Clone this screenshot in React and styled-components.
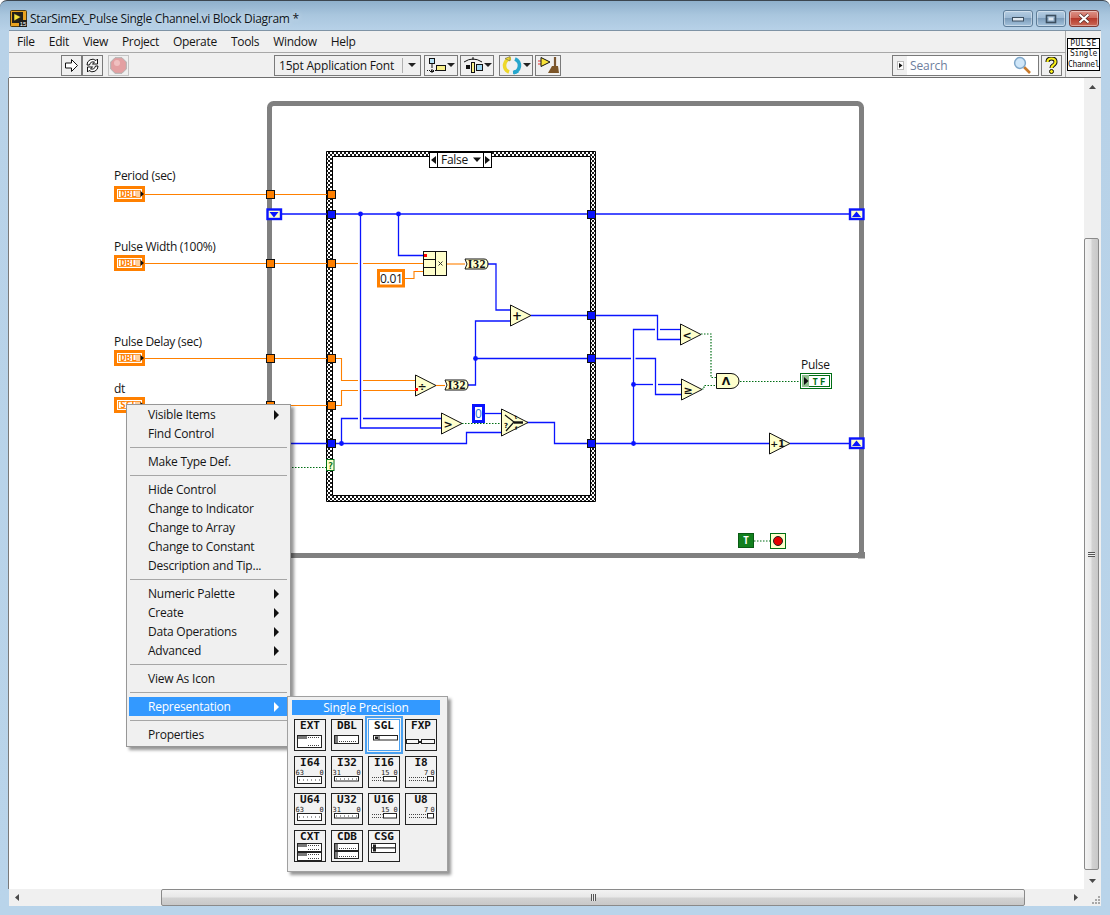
import React from "react";
import styled, { createGlobalStyle, css } from "styled-components";

const UI = `"Open Sans", "Noto Sans", "Liberation Sans", sans-serif`;
const MONO = `"DejaVu Sans Mono", "Liberation Mono", monospace`;

const Global = createGlobalStyle`
  html, body { margin: 0; padding: 0; background: #fff; }
  body { font-family: ${UI}; font-size: 12px; color: #111; }
  #root { width: 1110px; height: 915px; overflow: hidden; }
`;

const Win = styled.div`
  width: 1110px; height: 915px; box-sizing: border-box;
  display: flex; flex-direction: column;
  padding: 0 9px 9px;
  border-radius: 7px 7px 0 0;
  border-top: 1px solid #3c4650;
  background: linear-gradient(180deg, #8fb0cc 0, #a9c6de 14px, #b8d2e8 30px, #b9d4ea 100%);
`;
const TitleBar = styled.div`
  height: 29px; display: flex; align-items: center; flex: none; position: relative;
`;
const TitleText = styled.div`
  margin-left: 2px; font-size: 12px; letter-spacing: -0.3px; color: #10161c;
  text-shadow: 0 0 6px rgba(255,255,255,.7); padding-top: 6px;
`;
const Controls = styled.div`
  margin-left: auto; margin-right: 2px; display: flex; gap: 3px; align-self: flex-start; margin-top: 9px;
`;
const Ctl = styled.div`
  width: 30px; height: 17px; box-sizing: border-box; display: flex; align-items: center; justify-content: center;
  border: 1px solid #5d7c98; border-radius: 3px;
  background: linear-gradient(180deg, #b5cde2 0, #9cb9d4 45%, #7c9cba 50%, #a5c3dc 100%);
  box-shadow: inset 0 0 0 1px rgba(255,255,255,.4);
  ${p => p.$close && css`
    border-color: #7d3a35;
    background: linear-gradient(180deg, #dd9388 0, #cf6a5c 45%, #b53a2c 50%, #cb6a58 100%);
  `}
`;
const Client = styled.div`
  flex: 1; min-height: 0; display: flex; flex-direction: column; background: #f0f0f0;
  border-top: 1px solid #7f93a5;
`;
const TopArea = styled.div`
  height: 47px; flex: none; display: flex; background: #f0f0f0; border-bottom: 1px solid #6e6e6e; box-sizing: border-box;
`;
const TopLeft = styled.div`
  flex: 1; display: flex; flex-direction: column; border-right: 1px solid #a8a8a8;
`;
const MenuBar = styled.div`
  height: 21px; display: flex; align-items: center; padding-left: 1px; border-bottom: 1px solid #a8a8a8; flex: none;
`;
const MenuTitle = styled.span`
  padding: 0 7px; font-size: 12px; letter-spacing: -0.3px; color: #151515;
`;
const Toolbar = styled.div`
  flex: 1; display: flex; align-items: center; padding: 0 3px 0 52px;
`;
const Tool = styled.div`
  width: ${p => p.$w || 21}px; height: 21px; box-sizing: border-box; flex: none;
  margin-left: ${p => p.$ml || 0}px;
  display: flex; align-items: center; justify-content: center;
  border: 1px solid ${p => p.$light ? "#c4c4c4" : "#7a7a7a"};
  background: #f0f0f0;
`;
const FontRing = styled(Tool)`
  justify-content: flex-start; padding-left: 4px; font-size: 12px; color: #151515; letter-spacing: -0.2px;
`;
const RingSep = styled.span`
  margin-left: auto; width: 1px; height: 15px; background: #b0b0b0; margin-right: 5px;
`;
const Drop = styled.span`
  width: 0; height: 0; flex: none; margin-right: ${p => p.$mr ?? 4}px;
  border-left: 4px solid transparent; border-right: 4px solid transparent; border-top: 4px solid #222;
`;
const Search = styled.div`
  margin-left: auto; width: 147px; height: 21px; box-sizing: border-box; border: 1px solid #7a7a7a;
  background: #fff; display: flex; align-items: center; flex: none;
`;
const SearchTab = styled.div`
  width: 14px; align-self: stretch; background: #f0f0f0; display: flex; align-items: center; justify-content: center; margin-right: 2px;
`;
const SearchText = styled.span`
  font-size: 12px; color: #6d7d9c; flex: 1; padding-left: 1px; letter-spacing: -0.1px;
`;
const IconPane = styled.div`
  width: 35px; flex: none; display: flex; align-items: flex-start; justify-content: center; padding-top: 7px; box-sizing: border-box;
`;
const IconBox = styled.div`
  width: 33px; height: 33px; box-sizing: border-box; border: 1px solid #000; background: #fff;
  font-family: ${MONO}; font-size: 8px; line-height: 10.5px; text-align: center; color: #111; letter-spacing: -.35px;
`;
const IconHead = styled.div`
  border-bottom: 1px solid #000; height: 9px; line-height: 9px; letter-spacing: 0.5px;
`;
const Middle = styled.div`
  height: 811px; flex: none; display: flex;
`;
const Diagram = styled.div`
  flex: 1; position: relative; background: #fff; border-left: 1px solid #7a7a7a; margin-left: -1px;
`;
const DiagramSvg = styled.svg`
  display: block; width: 1075px; height: 811px;
`;
const VBar = styled.div`
  width: 17px; flex: none; display: flex; flex-direction: column; background: #f0f0f0;
`;
const ArrowCell = styled.div`
  width: 17px; height: ${p => p.$h || 17}px; flex: none; display: flex; align-items: center; justify-content: center;
`;
const VTrack = styled.div`
  flex: 1; display: flex; flex-direction: column; padding: 142px 2px 1px 0;
`;
const Thumb = styled.div`
  flex: 1; box-sizing: border-box; border: 1px solid #8a8a8a; border-radius: 2px; display: flex; align-items: center; justify-content: center;
  background: ${p => p.$v
    ? "linear-gradient(90deg,#f2f2f2 0,#e8e8e8 45%,#d2d2d2 55%,#c8c8c8 100%)"
    : "linear-gradient(180deg,#f2f2f2 0,#e8e8e8 45%,#d2d2d2 55%,#c8c8c8 100%)"};
`;
const Grip = styled.div`
  width: ${p => p.$v ? 7 : 5}px; height: ${p => p.$v ? 5 : 7}px;
  background: ${p => p.$v
    ? "repeating-linear-gradient(180deg,#555 0 1px,#eee 1px 2px)"
    : "repeating-linear-gradient(90deg,#555 0 1px,#eee 1px 2px)"};
`;
const HBar = styled.div`
  height: 17px; flex: none; display: flex; background: #f0f0f0;
`;
const HTrack = styled.div`
  flex: 1; display: flex; padding: 0 42px 0 135px;
`;
const Corner = styled.div`
  width: 17px; flex: none; display: flex; align-items: flex-end; justify-content: flex-end;
`;

/* context menu */
const Menu = styled.div`
  position: absolute; left: 117px; top: 326px; width: 165px; box-sizing: border-box; z-index: 3;
  background: #f0f0f0; border: 1px solid #979797; padding: 0 2px 2px;
  box-shadow: 3px 3px 3px rgba(0,0,0,.42);
`;
const Row = styled.div`
  height: 19px; display: flex; align-items: center; padding-left: 19px; padding-right: 9px;
  font-size: 12px; color: #151515; letter-spacing: -0.22px;
  ${p => p.$on && css`background: #3399ff; color: #fff;`}
`;
const RowArrow = styled.span`
  margin-left: auto; width: 0; height: 0;
  border-top: 5px solid transparent; border-bottom: 5px solid transparent;
  border-left: 5px solid ${p => p.$on ? "#fff" : "#111"};
`;
const Sep = styled.div`
  height: 9px; display: flex; align-items: center; padding: 0 1px;
  &::before { content: ""; flex: 1; height: 1px; background: #a6a6a6; }
`;
const Palette = styled.div`
  position: absolute; left: 278px; top: 618px; width: 161px; height: 176px; box-sizing: border-box; z-index: 4;
  background: #f0f0f0; border: 1px solid #a0a0a0; padding: 3px 7px 0 4px;
  box-shadow: 3px 3px 3px rgba(0,0,0,.42);
`;
const PaletteHead = styled.div`
  height: 15px; background: #3399ff; color: #fff; text-align: center; font-size: 12px; line-height: 15px; margin-bottom: 4px; letter-spacing: -.1px;
`;
const RepGrid = styled.div`
  display: grid; grid-template-columns: repeat(4, 32px); grid-auto-rows: 32px; gap: 5px; padding-left: 2px;
`;
const RepCell = styled.div`
  position: relative; box-sizing: border-box; border: 1px solid #222; background: #f2f2f2;
  display: flex; flex-direction: column; align-items: center;
  ${p => p.$sel && css`outline: 2px solid #4aa0f0; outline-offset: 1px; border-color: #4aa0f0; background: #fff;`}
`;
const RepTitle = styled.span`
  font-family: ${MONO}; font-weight: 700; font-size: 11px; line-height: 12px; height: 12px; color: #111;
`;
const RepSvg = styled.svg`
  display: block; width: 30px; height: 18px;
`;

/* svg text parts */
const Lbl = styled.text`
  font-family: ${UI}; font-size: 12px; fill: #151515; letter-spacing: -0.3px;
`;
const Glyph = styled.text`
  font-family: "DejaVu Sans", sans-serif; font-weight: 700; font-size: ${p => p.$s || 11}px; fill: #111; text-anchor: middle;
`;
const TermText = styled.text`
  font-family: ${MONO}; font-weight: 700; font-size: ${p => p.$s || 9}px; fill: ${p => p.$c}; text-anchor: middle;
`;
const I32Text = styled.text`
  font-family: "Liberation Serif", serif; font-weight: 700; font-size: 12px; fill: #111; text-anchor: middle; letter-spacing: .6px;
`;
const TinyNum = styled.text`
  font-family: ${MONO}; font-size: 7px; fill: #222;
`;

const BLUE = "#0a14ff", OR = "#ff8000", GR = "#006e14", Y = "#ffffcc";

const blue = [
  "281,214 327,214", "335,214 587,214", "595,214 849,214",
  "360.5,214 360.5,428 441,428", "398.5,214 398.5,255.5 423,255.5",
  "488,264 496,264 496,310 510,310", "531,315.5 587,315.5",
  "595,315.5 657.5,315.5 657.5,339.5 680,339.5",
  "468,385 475.5,385 475.5,321 510,321", "475.5,358.5 587,358.5",
  "595,358.5 631,358.5", "635.5,358.5 655.5,358.5 655.5,394.5 681,394.5",
  "633.5,443 633.5,329.5 655,329.5", "660,329.5 680,329.5",
  "633.5,384.5 653,384.5", "658,384.5 681,384.5",
  "595,443.5 769,443.5", "790,443.5 849,443.5",
  "527,422.5 554.5,422.5 554.5,443.5 587,443.5",
  "335,443.5 466.5,443.5 466.5,432.5 501,432.5",
  "341.5,443.5 341.5,418.5 358,418.5", "363,418.5 441,418.5",
  "485,413.5 501,413.5", "280,443.5 327,443.5",
];
const orange = [
  "145,194.5 266,194.5", "275,194.5 327,194.5",
  "145,263.5 266,263.5", "275,263.5 327,263.5", "335,263.5 358,263.5", "363,263.5 423,263.5",
  "405,278.5 414,278.5 414,271.5 423,271.5", "447,264 465,264",
  "145,358.5 266,358.5", "275,358.5 327,358.5",
  "335,358.5 341.5,358.5 341.5,380.5 358,380.5", "363,380.5 415,380.5",
  "280,405.5 327,405.5",
  "335,405.5 341.5,405.5 341.5,390.5 358,390.5", "363,390.5 415,390.5",
  "436,385.5 445,385.5",
];
const green = [
  "280,467.5 326,467.5", "462,423.5 501,423.5",
  "701,334 711,334 711,377.5 716,377.5", "702,389 704,389 704,385.5 716,385.5",
  "740,381.5 800,381.5", "754,541 770,541",
];
const tunnels = [
  [266, 190, OR], [327, 190, OR], [266, 259, OR], [327, 259, OR],
  [266, 354, OR], [327, 354, OR], [266, 401, OR], [327, 401, OR],
  [327, 210, BLUE], [587, 210, BLUE], [587, 311, BLUE], [587, 354, BLUE],
  [327, 439, BLUE], [587, 439, BLUE],
];
const junctions = [
  [360.5, 214], [398.5, 214], [475.5, 358.5], [341.5, 443.5], [633.5, 384.5], [633.5, 443.5],
];
const triangles = [
  { x: 510, y: 305, t: "+", s: 12, dy: 4 }, { x: 415, y: 375, t: "÷", s: 11, dy: 4, dot: true },
  { x: 441, y: 413, t: ">", s: 11, dy: 4 }, { x: 680, y: 324, t: "<", s: 11, dy: 4 },
  { x: 681, y: 379, t: "≥", s: 11, dy: 4 }, { x: 769, y: 433, t: "+1", s: 9.5, dy: 3.5, dx: 1.5 },
];

function Wires({ list, color, dash, w = 1.3 }) {
  return list.map(p => (
    <polyline key={p} points={p} fill="none" stroke={color} strokeWidth={w} strokeDasharray={dash} />
  ));
}
function Tri({ x, y, t, s, dy, dot, dx = 0 }) {
  return (
    <g>
      <polygon points={`${x + .5},${y} ${x + .5},${y + 21} ${x + 21},${y + 10.5}`} fill={Y} stroke="#111" />
      <Glyph x={x + 7 + dx} y={y + 10.5 + dy} $s={s}>{t}</Glyph>
      {dot && <rect x={x} y={y + 13} width="3" height="3" fill="#f00" />}
    </g>
  );
}
function Term({ x, y, t }) {
  return (
    <g>
      <rect x={x + 1.5} y={y + 1.5} width="28" height="13" fill="#fff" stroke={OR} strokeWidth="3" />
      <rect x={x + 4.5} y={y + 4.5} width="22" height="7" fill="#fff" stroke={OR} strokeWidth=".8" />
      <rect x={x + 21} y={y + 5} width="5" height="6" fill="#ffcf9e" />
      <TermText x={x + 14.5} y={y + 11.3} $c={OR}>{t}</TermText>
      <polygon points={`${x + 26.5},${y + 5} ${x + 26.5},${y + 11} ${x + 30},${y + 8}`} fill="#111" />
    </g>
  );
}
function Coerce({ x, y }) {
  return (
    <g>
      <path d={`M${x} ${y}H${x + 19}Q${x + 23} ${y} ${x + 23} ${y + 5}T${x + 19} ${y + 10}H${x}L${x + 2} ${y + 5}Z`} fill={Y} stroke="#111" />
      <I32Text x={x + 12} y={y + 9.2}>I32</I32Text>
    </g>
  );
}
function ShiftReg({ x, y, up }) {
  return (
    <g>
      <rect x={x + 1} y={y + 1} width="13.5" height="9.5" fill={Y} stroke={BLUE} strokeWidth="2.4" />
      <polygon points={up ? `${x + 3},${y + 8.5} ${x + 12},${y + 8.5} ${x + 7.5},${y + 3}` : `${x + 3},${y + 3.5} ${x + 12},${y + 3.5} ${x + 7.5},${y + 9}`} fill={BLUE} />
    </g>
  );
}

function Diagram2() {
  return (
    <DiagramSvg viewBox="9 78 1075 811" aria-label="block diagram">
      <defs>
        <pattern id="chk" width="4" height="4" patternUnits="userSpaceOnUse">
          <rect width="4" height="4" fill="#fff" />
          <rect width="2" height="2" fill="#1a1a1a" />
          <rect x="2" y="2" width="2" height="2" fill="#1a1a1a" />
        </pattern>
      </defs>
      {/* while loop */}
      <rect x="269.5" y="103.5" width="592" height="452" rx="4" fill="none" stroke="#808080" strokeWidth="5" />
      <rect x="858" y="552" width="7" height="6.5" fill="#808080" />
      {/* case structure */}
      <path d="M326.5 151.5H595.5V501.5H326.5Z M332.5 156.5V495.5H590.5V156.5Z" fillRule="evenodd" fill="url(#chk)" stroke="#000" />
      <Wires list={orange} color={OR} w={1.1} />
      <Wires list={blue} color={BLUE} />
      <Wires list={green} color={GR} dash="1.5 1.5" w={1.2} />
      {tunnels.map(([x, y, c]) => (
        <rect key={`${x}-${y}`} x={x + .5} y={y + .5} width="8" height="8" fill={c} stroke="#111" />
      ))}
      {junctions.map(([x, y]) => <circle key={`${x}-${y}`} cx={x} cy={y} r="2.4" fill={BLUE} />)}
      <rect x="276.5" y="533.5" width="14" height="15" fill={Y} stroke={BLUE} />

      <Lbl x="114" y="180">Period (sec)</Lbl>
      <Term x={114} y={186} t="DBL" />
      <Lbl x="114" y="251">Pulse Width (100%)</Lbl>
      <Term x={114} y={255} t="DBL" />
      <Lbl x="114" y="346">Pulse Delay (sec)</Lbl>
      <Term x={114} y={350} t="DBL" />
      <Lbl x="114" y="393">dt</Lbl>
      <Term x={114} y={397} t="SGL" />

      <ShiftReg x={266.5} y={208.5} />
      <ShiftReg x={849} y={208.5} up />
      <ShiftReg x={849} y={437.5} up />

      {/* case selector */}
      <rect x="429.5" y="152.5" width="62" height="15" fill="#fff" stroke="#000" />
      <path d="M437.5 152.5V167.5M483.5 152.5V167.5" stroke="#000" />
      <polygon points="436,156 436,164 431,160" fill="#111" />
      <polygon points="485,156 485,164 490,160" fill="#111" />
      <Lbl x="441" y="164">False</Lbl>
      <polygon points="473,157.5 481,157.5 477,162" fill="#111" />

      {/* compound arithmetic */}
      <rect x="423.5" y="251.5" width="23" height="24" fill={Y} stroke="#111" />
      <path d="M435.5 251.5V275.5M423.5 259.5H435.5M423.5 267.5H435.5" stroke="#111" />
      <rect x="424" y="254" width="3" height="3" fill="#f00" />
      <path d="M438.5 261.5l4 4M442.5 261.5l-4 4" stroke="#333" />

      <rect x="378.5" y="270.5" width="25" height="15.5" fill="#fff" stroke={OR} strokeWidth="3" />
      <Lbl x="380" y="283">0.01</Lbl>
      <Coerce x={465} y={259} />
      <Coerce x={445} y={380} />

      {triangles.map(t => <Tri key={t.x} {...t} />)}

      {/* select */}
      <polygon points="501.5,409 501.5,436 528,422.5" fill={Y} stroke="#111" />
      <path d="M505 415L514 422L506 431" stroke="#111" fill="none" strokeWidth="1.2" />
      <path d="M514 422.5H523" stroke="#111" strokeWidth="2.4" />
      <Glyph x="506" y="428" $s={7}>?</Glyph>
      <Glyph x="516" y="419" $s={5}>t</Glyph>
      <Glyph x="516" y="430" $s={5}>f</Glyph>

      <rect x="473.5" y="405.5" width="10" height="16" fill="#fff" stroke={BLUE} strokeWidth="3" />
      <Lbl x="475" y="418" style={{ fill: "#2a6fd0" }}>0</Lbl>

      {/* and */}
      <path d="M716.5 373.5H731A8 7.5 0 0 1 731 388.5H716.5Z" fill={Y} stroke="#111" />
      <Glyph x="726" y="385" $s={11}>Λ</Glyph>

      <Lbl x="801" y="369">Pulse</Lbl>
      <rect x="800.5" y="373.5" width="31" height="15" fill="#fff" stroke={GR} />
      <rect x="802.5" y="375.5" width="27" height="11" fill="#fff" stroke={GR} />
      <rect x="802" y="375" width="7" height="12" fill="#8fbf8f" />
      <polygon points="804,377 804,385 808.5,381" fill="#111" />
      <TermText x="820" y="385" $c={GR} $s={9} style={{ letterSpacing: 2 }}>TF</TermText>

      <rect x="738.5" y="533.5" width="15" height="14" fill="#12801e" stroke="#0a5a14" />
      <TermText x="746" y="544" $c="#fff" $s={10}>T</TermText>
      <rect x="770.5" y="533.5" width="15" height="15" fill={Y} stroke={GR} />
      <circle cx="778" cy="541" r="4.5" fill="#e40000" stroke="#222" />

      <rect x="326.5" y="459.5" width="7.5" height="11" fill={Y} stroke={GR} />
      <TermText x="330.5" y="468.5" $c={GR} $s={9}>?</TermText>
    </DiagramSvg>
  );
}

const menuItems = [
  { t: "Visible Items", a: 1 }, { t: "Find Control" }, 0,
  { t: "Make Type Def." }, 0,
  { t: "Hide Control" }, { t: "Change to Indicator" }, { t: "Change to Array" }, { t: "Change to Constant" }, { t: "Description and Tip..." }, 0,
  { t: "Numeric Palette", a: 1 }, { t: "Create", a: 1 }, { t: "Data Operations", a: 1 }, { t: "Advanced", a: 1 }, 0,
  { t: "View As Icon" }, 0,
  { t: "Representation", a: 1, on: 1 }, 0,
  { t: "Properties" },
];

const repCells = [
  ["EXT", "ext"], ["DBL", "dbl"], ["SGL", "sgl", 1], ["FXP", "fxp"],
  ["I64", "64"], ["I32", "32"], ["I16", "16"], ["I8", "8"],
  ["U64", "64"], ["U32", "32"], ["U16", "16"], ["U8", "8"],
  ["CXT", "cxt"], ["CDB", "cdb"], ["CSG", "csg"],
];

function Bar({ x, y, w, h, hatch, tall }) {
  return (
    <g>
      <rect x={x + .5} y={y + .5} width={w} height={h} fill="#fff" stroke="#222" />
      {hatch > 0 && <rect x={x + 1} y={y + 1} width={hatch} height={tall ? 3 : h - 1} fill="#777" />}
      <path d={`M${x + hatch + 2} ${y + h - 1.5}H${x + w - 1}`} stroke="#444" strokeDasharray="1 1" />
      {tall && <path d={`M${x + hatch + 2} ${y + 2.5}H${x + w - 1}`} stroke="#444" strokeDasharray="1 1" />}
    </g>
  );
}
const leftBit = { "64": "63", "32": "31", "16": "15", "8": "7" };
const leftX = { "64": 0.5, "32": 0.5, "16": 12, "8": 18 };
function IntGlyph({ kind }) {
  const wide = kind === "64" || kind === "32";
  const boxX = wide ? 2.5 : kind === "16" ? 14.5 : 21.5;
  const boxW = wide ? 24 : kind === "16" ? 13 : 6;
  const boxH = kind === "64" ? 7 : 4.5;
  return (
    <g>
      <TinyNum x={leftX[kind]} y="6">{leftBit[kind]}</TinyNum>
      <TinyNum x="24.5" y="6">0</TinyNum>
      <rect x={boxX} y="7.5" width={boxW} height={boxH} fill="#fff" stroke="#222" />
      {!wide && <path d={`M3 8.5H${boxX - 1}M3 11.5H${boxX - 1}`} stroke="#444" strokeDasharray="1 1" />}
      {wide && <path d={`M4 ${kind === "64" ? 11 : 10}H26`} stroke="#444" strokeDasharray="1 3" />}
    </g>
  );
}
function RepGlyph({ kind }) {
  let body;
  if (kind === "ext") body = <Bar x={2} y={3} w={24} h={12} hatch={9} tall />;
  else if (kind === "dbl") body = <Bar x={2} y={3} w={24} h={8} hatch={3} />;
  else if (kind === "sgl") body = <g><rect x="4.5" y="3.5" width="24" height="4.5" fill="#fff" stroke="#222" /><rect x="6" y="4.5" width="3" height="2.5" fill="#222" /><path d="M10 3.5V8" stroke="#222" /></g>;
  else if (kind === "fxp") body = <g><rect x=".5" y="7.5" width="12" height="4" fill="#f8f8f8" stroke="#222" /><rect x="15.5" y="7.5" width="13" height="4" fill="#f8f8f8" stroke="#222" /><rect x="13" y="9" width="2" height="2" fill="#222" /></g>;
  else if (kind === "cxt") body = <g><Bar x={2} y={0} w={24} h={8} hatch={9} tall /><Bar x={2} y={9} w={24} h={8} hatch={9} tall /></g>;
  else if (kind === "cdb") body = <g><Bar x={2} y={0} w={24} h={7} hatch={3} /><Bar x={2} y={8} w={24} h={7} hatch={3} /></g>;
  else if (kind === "csg") body = <g><rect x="2.5" y=".5" width="24" height="4.5" fill="#fff" stroke="#222" /><rect x="2.5" y="5" width="24" height="4.5" fill="#fff" stroke="#222" /><rect x="4" y="1.5" width="3" height="7" fill="#222" /></g>;
  else body = <IntGlyph kind={kind} />;
  return <RepSvg viewBox="0 0 30 18">{body}</RepSvg>;
}

const TinyArrow = ({ d }) => (
  <svg width="9" height="9" viewBox="0 0 9 9">
    <polygon fill="#4a4a4a" points={{
      up: "4.5,2 8,6 1,6", down: "4.5,7 8,3 1,3", left: "2,4.5 6,1 6,8", right: "7,4.5 3,1 3,8",
    }[d]} />
  </svg>
);

export default function App() {
  return (
    <>
      <Global />
      <Win>
        <TitleBar>
          <svg width="18" height="17" viewBox="0 0 18 17" style={{ marginTop: 6, marginLeft: 1, flex: "none" }}>
            <rect x=".5" y=".5" width="16" height="16" rx="1" fill="#e9a21f" stroke="#4c3a10" />
            <rect x="2" y="2" width="11" height="11" fill="#23201a" />
            <polygon points="4,3.5 4,11 11,7" fill="#f8e23a" stroke="#111" strokeWidth=".5" />
            <rect x="9" y="10" width="8" height="7" fill="#1c1c1c" />
            <text x="13" y="16" fontSize="6" fill="#fff" textAnchor="middle" fontFamily="Liberation Sans">15</text>
          </svg>
          <TitleText>StarSimEX_Pulse Single Channel.vi Block Diagram *</TitleText>
          <Controls>
            <Ctl><svg width="12" height="7"><rect x=".5" y="2.5" width="11" height="3.5" fill="#dfe8f0" stroke="#3c4f60" /></svg></Ctl>
            <Ctl><svg width="12" height="10"><rect x="1.5" y="1.5" width="9" height="7" fill="none" stroke="#3c4f60" strokeWidth="1.6" /><rect x="3.5" y="3.5" width="5" height="3" fill="#dfe8f0" /></svg></Ctl>
            <Ctl $close><svg width="14" height="11" viewBox="0 0 14 11"><path d="M2.5 1.5L11.5 9.5M11.5 1.5L2.5 9.5" stroke="#4b2420" strokeWidth="3.4" /><path d="M2.5 1.5L11.5 9.5M11.5 1.5L2.5 9.5" stroke="#fff" strokeWidth="2.2" /></svg></Ctl>
          </Controls>
        </TitleBar>
        <Client>
          <TopArea>
            <TopLeft>
              <MenuBar>
                {["File", "Edit", "View", "Project", "Operate", "Tools", "Window", "Help"].map(m => <MenuTitle key={m}>{m}</MenuTitle>)}
              </MenuBar>
              <Toolbar>
                <Tool>
                  <svg width="15" height="15" viewBox="0 0 15 15"><path d="M1.5 5H7.5V1.5L13.5 7.5L7.5 13.5V10H1.5Z" fill="#fff" stroke="#111" /></svg>
                </Tool>
                <Tool>
                  <svg width="17" height="17" viewBox="0 0 17 17"><path d="M3 8A5.5 5.5 0 0 1 12 3.5L13.5 2V7H8.5L10.5 5.2A3.5 3.5 0 0 0 5.5 8Z" fill="#fff" stroke="#111" /><path d="M14 9A5.5 5.5 0 0 1 5 13.5L3.5 15V10H8.5L6.5 11.8A3.5 3.5 0 0 0 11.5 9Z" fill="#fff" stroke="#111" /></svg>
                </Tool>
                <Tool $ml={5} $light>
                  <svg width="17" height="17" viewBox="0 0 17 17"><polygon points="5,.7 12,.7 16.3,5 16.3,12 12,16.3 5,16.3 .7,12 .7,5" fill="#e3a0a2" stroke="#b0b0b0" /><circle cx="7" cy="6" r="3" fill="#f0c0c0" /></svg>
                </Tool>
                <FontRing as="div" $w={147} $ml={145}>15pt Application Font<RingSep /><Drop /></FontRing>
                <Tool $w={34} $ml={3}>
                  <svg width="20" height="17" viewBox="0 0 20 17"><rect x="2.5" y="1.5" width="5" height="5" fill="#b8e4f8" stroke="#111" /><path d="M5 7V11" stroke="#111" /><path d="M0 13.5H20" stroke="#111" strokeDasharray="1 1" /><path d="M5 12V16M3 14.5H7" stroke="#111" /><rect x="9.5" y="8.5" width="9" height="5" fill="#f8f08a" stroke="#111" /></svg>
                  <Drop $mr={0} />
                </Tool>
                <Tool $w={34} $ml={2}>
                  <svg width="22" height="17" viewBox="0 0 22 17"><path d="M2 5Q11 -1 20 5" fill="none" stroke="#111" /><path d="M11 0V3" stroke="#111" /><rect x="4" y="8" width="4" height="4" fill="#111" /><rect x="9.5" y="5.5" width="3" height="10" fill="#f8f08a" stroke="#111" /><rect x="14.5" y="7.5" width="6" height="6" fill="#9fd8f2" stroke="#111" /></svg>
                  <Drop $mr={0} />
                </Tool>
                <Tool $w={34} $ml={5}>
                  <svg width="22" height="19" viewBox="0 0 22 19"><path d="M10 2.5A7 7 0 0 0 8 16" fill="none" stroke="#eed82a" strokeWidth="3.6" /><path d="M9 .5V5L4 2.5Z" fill="#eed82a" stroke="#555" strokeWidth=".5" /><path d="M12 16.5A7 7 0 0 0 14 3" fill="none" stroke="#27a6cc" strokeWidth="3.6" /><path d="M13 18.5V14L18 16.5Z" fill="#27a6cc" /></svg>
                  <Drop $mr={0} />
                </Tool>
                <Tool $w={26} $ml={2}>
                  <svg width="23" height="19" viewBox="0 0 23 19"><path d="M1 5H4M1 8H4" stroke="#d33" /><polygon points="4,1.5 4,10.5 13,6" fill="#f8e23a" stroke="#111" /><path d="M18 1V10" stroke="#7a5630" strokeWidth="2.2" /><polygon points="11,17 22,17 21,10 15,10" fill="#7c5528" /></svg>
                </Tool>
                <Search>
                  <SearchTab><svg width="7" height="9"><rect x=".5" y=".5" width="6" height="8" fill="#fff" stroke="#bbb" /><polygon points="2,2 2,7 5.5,4.5" fill="#111" /></svg></SearchTab>
                  <SearchText>Search</SearchText>
                  <svg width="18" height="18" viewBox="0 0 18 18" style={{ marginRight: 7 }}><path d="M11 11L17 17" stroke="#c8792a" strokeWidth="2.6" /><circle cx="7" cy="7" r="5.4" fill="#cfe6f8" stroke="#7fa7c9" strokeWidth="1.5" /></svg>
                </Search>
                <Tool $ml={2}>
                  <svg width="13" height="17" viewBox="0 0 13 17"><path d="M2.5 5Q2.5 1.5 6.5 1.5T10.5 5Q10.5 7 8 8.5Q6.5 9.5 6.5 11" fill="none" stroke="#111" strokeWidth="4" /><path d="M2.5 5Q2.5 1.5 6.5 1.5T10.5 5Q10.5 7 8 8.5Q6.5 9.5 6.5 11" fill="none" stroke="#f8ee1a" strokeWidth="2.2" /><circle cx="6.5" cy="14.5" r="2" fill="#f8ee1a" stroke="#111" /></svg>
                </Tool>
              </Toolbar>
            </TopLeft>
            <IconPane>
              <IconBox>
                <IconHead>PULSE</IconHead>
                Single<br />Channel
              </IconBox>
            </IconPane>
          </TopArea>
          <Middle>
            <Diagram>
              <Diagram2 />
              <Menu>
                {menuItems.map((m, i) => m === 0
                  ? <Sep key={i} />
                  : <Row key={m.t} $on={m.on}>{m.t}{m.a && <RowArrow $on={m.on} />}</Row>)}
              </Menu>
              <Palette>
                <PaletteHead>Single Precision</PaletteHead>
                <RepGrid>
                  {repCells.map(([t, k, sel]) => (
                    <RepCell key={t} $sel={sel}>
                      <RepTitle>{t}</RepTitle>
                      <RepGlyph kind={k} />
                    </RepCell>
                  ))}
                </RepGrid>
              </Palette>
            </Diagram>
            <VBar>
              <ArrowCell $h={18}><TinyArrow d="up" /></ArrowCell>
              <VTrack><Thumb $v><Grip $v /></Thumb></VTrack>
              <ArrowCell $h={18}><TinyArrow d="down" /></ArrowCell>
            </VBar>
          </Middle>
          <HBar>
            <ArrowCell><TinyArrow d="left" /></ArrowCell>
            <HTrack><Thumb><Grip /></Thumb></HTrack>
            <ArrowCell><TinyArrow d="right" /></ArrowCell>
            <Corner>
              <svg width="13" height="13" viewBox="0 0 13 13"><path d="M10 3h2v2h-2zM7 6h2v2H7zM10 6h2v2h-2zM4 9h2v2H4zM7 9h2v2H7zM10 9h2v2h-2z" fill="#a8a8a8" /></svg>
            </Corner>
          </HBar>
        </Client>
      </Win>
    </>
  );
}
